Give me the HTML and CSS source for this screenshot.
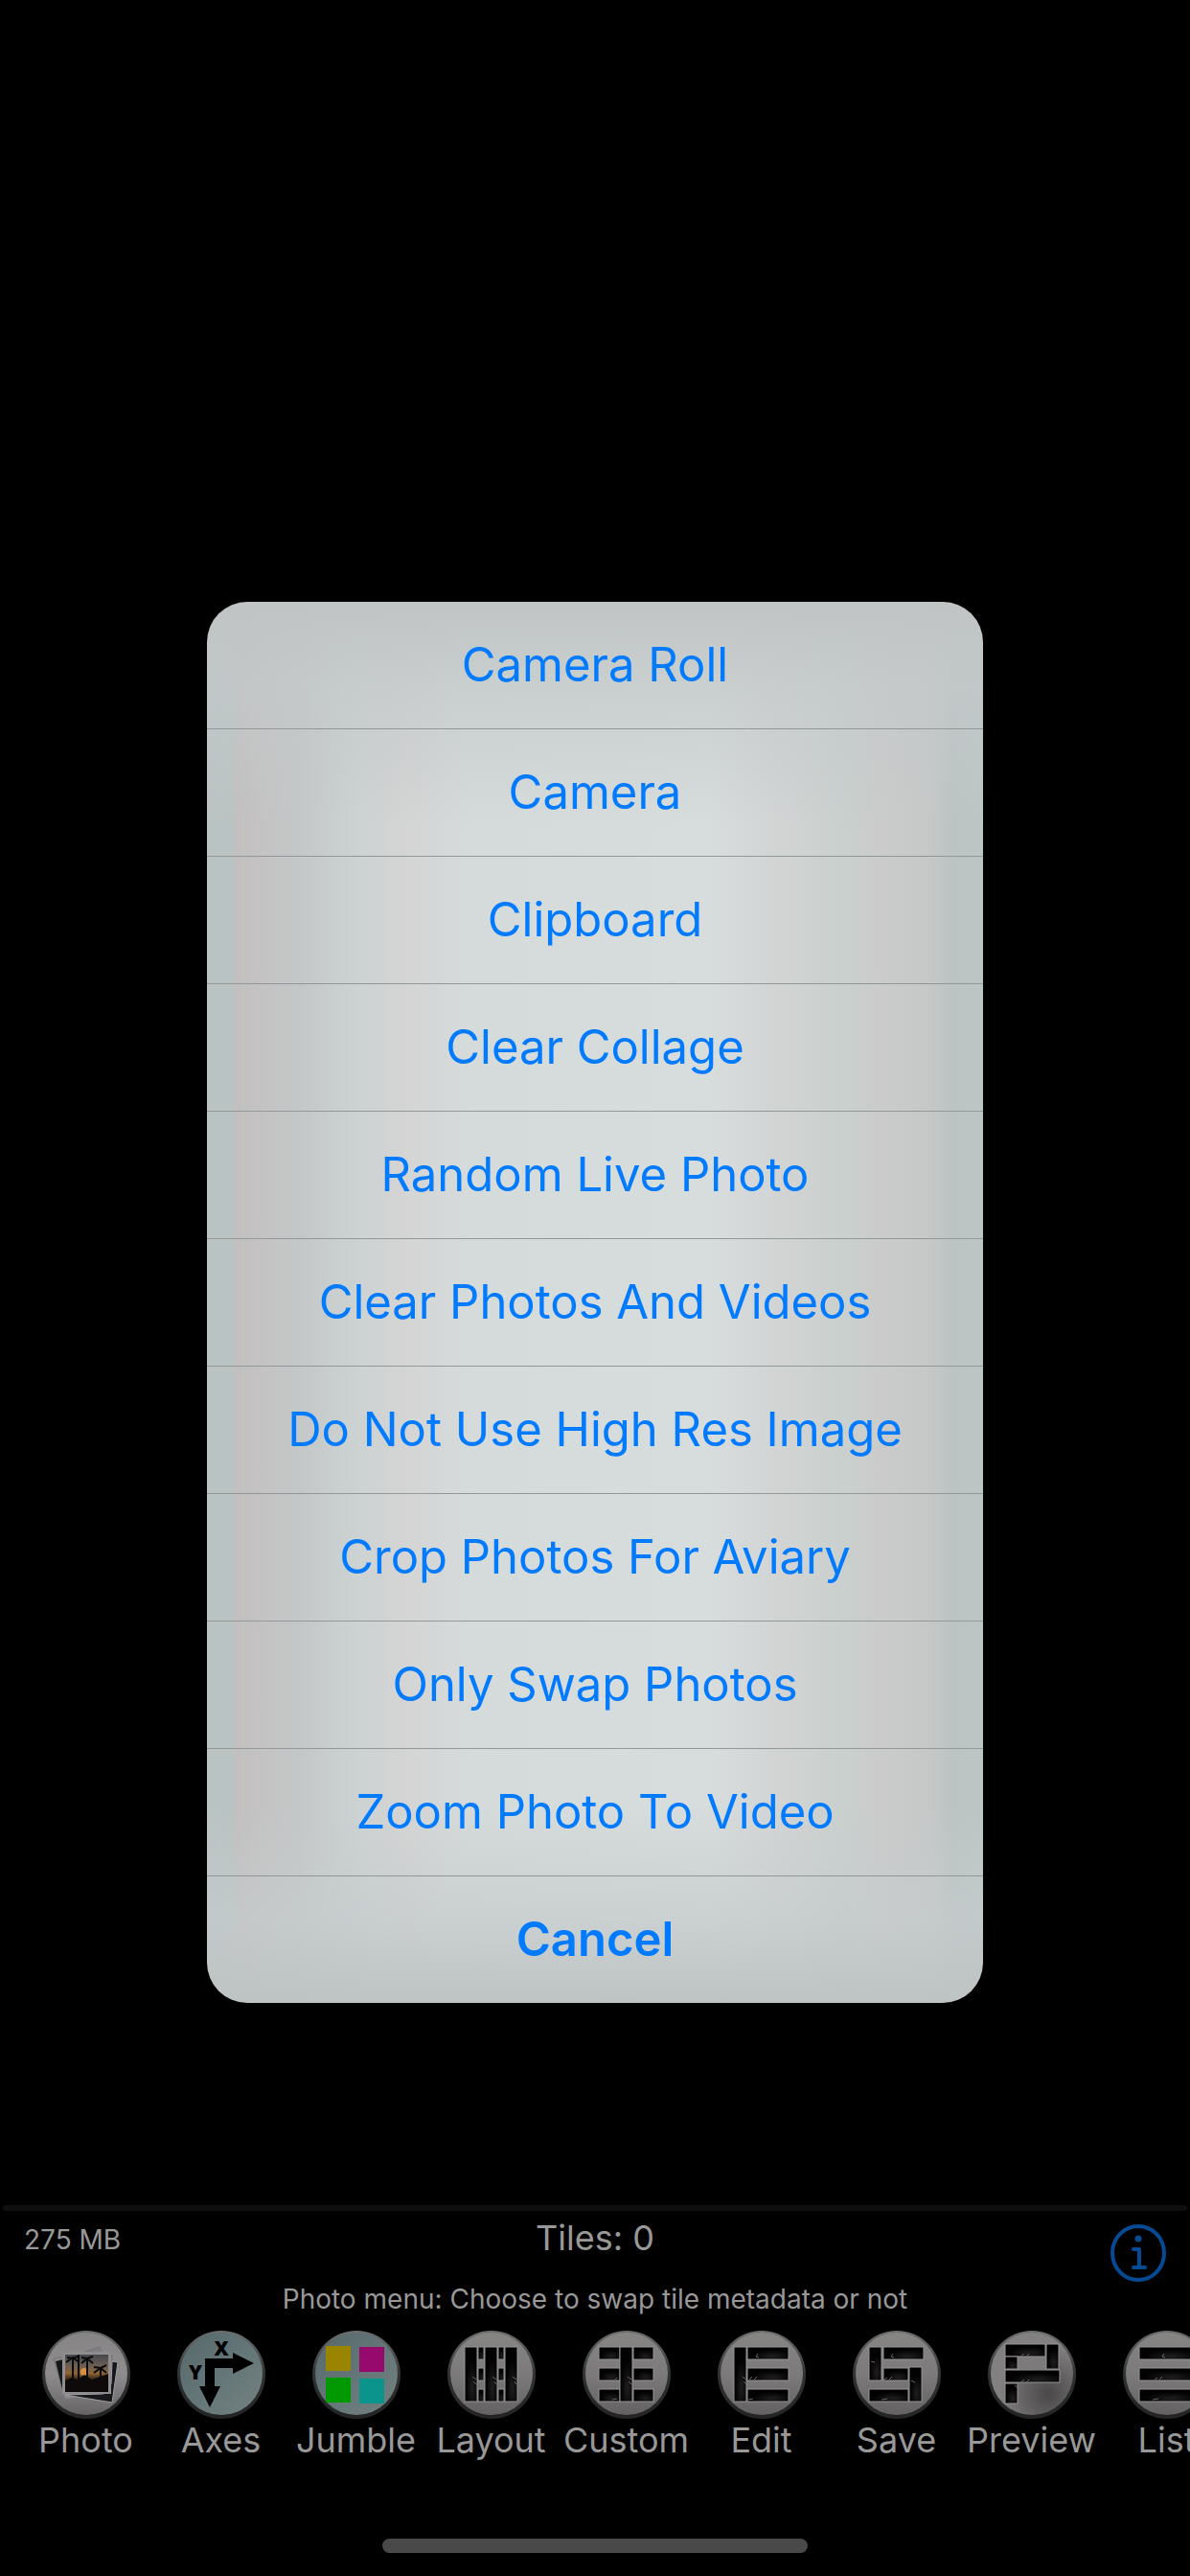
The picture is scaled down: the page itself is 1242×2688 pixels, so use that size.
FILE: index.html
```html
<!DOCTYPE html>
<html lang="en">
<head>
  <meta charset="UTF-8">
  <meta name="viewport" content="width=device-width, initial-scale=1">
  <title>Collage</title>
  <link rel="stylesheet" href="styles.css">
</head>
<body>
  <!-- Shared gradients for the toolbar icons -->
  <svg class="defs" width="0" height="0" aria-hidden="true">
    <defs>
      <linearGradient id="rim" x1="0" y1="0" x2="0" y2="1">
        <stop offset="0" stop-color="#6f7070"/>
        <stop offset="0.5" stop-color="#303233"/>
        <stop offset="1" stop-color="#222324"/>
      </linearGradient>
      <linearGradient id="gray" x1="0" y1="0" x2="0" y2="1">
        <stop offset="0" stop-color="#878484"/>
        <stop offset="0.5" stop-color="#7d7a7b"/>
        <stop offset="1" stop-color="#636161"/>
      </linearGradient>
      <linearGradient id="silver" x1="0" y1="0" x2="0" y2="1">
        <stop offset="0" stop-color="#868484"/>
        <stop offset="0.5" stop-color="#8f8c8e"/>
        <stop offset="1" stop-color="#666465"/>
      </linearGradient>
      <linearGradient id="teal" x1="0" y1="0" x2="1" y2="1">
        <stop offset="0" stop-color="#57686a"/>
        <stop offset="0.5" stop-color="#647678"/>
        <stop offset="1" stop-color="#74817f"/>
      </linearGradient>
      <radialGradient id="shade" cx="0.7" cy="0.75" r="0.6">
        <stop offset="0" stop-color="#4a4849"/>
        <stop offset="0.5" stop-color="#646263"/>
        <stop offset="1" stop-color="#828080"/>
      </radialGradient>
      <radialGradient id="glow" cx="0.6" cy="0.75" r="0.5">
        <stop offset="0" stop-color="#1e1e1e"/>
        <stop offset="1" stop-color="#020202"/>
      </radialGradient>
      <linearGradient id="sunset" x1="0" y1="0" x2="0" y2="1">
        <stop offset="0" stop-color="#45474d"/>
        <stop offset="0.3" stop-color="#6b5f55"/>
        <stop offset="0.5" stop-color="#8f6430"/>
        <stop offset="0.62" stop-color="#4a3320"/>
        <stop offset="1" stop-color="#0c0908"/>
      </linearGradient>
    </defs>
  </svg>

  <main class="canvas"></main>

  <footer class="panel">
    <div class="divider"></div>
    <div class="status">
      <span class="memory">275 MB</span>
      <span class="tiles">Tiles: 0</span>
      <button class="info" type="button" aria-label="Info">
        <svg width="58" height="60" viewBox="0 0 58 60" fill="none" stroke="#044a94">
          <ellipse cx="29" cy="30" rx="27" ry="28" stroke-width="4"/>
          <circle cx="29" cy="15" r="3.5" fill="#044a94" stroke="none"/>
          <path d="M24 26h6v19M24 45h12" stroke-width="4" stroke-linecap="round" stroke-linejoin="round"/>
        </svg>
      </button>
    </div>
    <p class="message">Photo menu: Choose to swap tile metadata or not</p>

    <nav class="toolbar">
      <button class="tool" type="button">
        <svg viewBox="0 0 92 92">
          <circle cx="46" cy="46" r="46" fill="url(#rim)"/>
          <circle cx="46" cy="45" r="43" fill="url(#silver)"/>
          <g stroke="#a19fa1">
            <path d="M12 29l40-5 6 42-34 6z" fill="#8b898b" stroke="#777577"/>
            <path d="M32 26l28-9 3 6 10 3-1 48-46-7z" fill="#807e80" stroke="#777577"/>
            <path d="M14 32l8-2v35z" fill="#151719" stroke="none"/>
            <path d="M73 32l6 1-6 42-49-8 40-1 8-10z" fill="#17181b"/>
          </g>
          <path d="M21 22h51v44H21z" fill="#8f8d8f"/>
          <path d="M24 25h45v39H24z" fill="url(#sunset)"/>
          <circle cx="44" cy="43" r="4" fill="#d8903a"/>
          <path d="M24 52l7-3 6 2 7-5 8 5 17-6v19H24z" fill="#0d0a09"/>
          <path d="M32 30v30M38 25v36M47 30v22M61 39v13" stroke="#0b0a0c" stroke-width="2"/>
          <path d="M25 33l7-5 5 4M26 28l6 1 5-2M41 34l6-5 6 5M41 28l6 1 6-2M54 44l7-5 6 5M54 38l7 1 6-3" fill="none" stroke="#0b0a0c" stroke-width="2"/>
        </svg>
        <span>Photo</span>
      </button>
      <button class="tool" type="button">
        <svg viewBox="0 0 92 92">
          <circle cx="46" cy="46" r="46" fill="url(#rim)"/>
          <circle cx="46" cy="45" r="43" fill="url(#teal)"/>
          <path d="M29 29h29v-6l22 11-22 11v-6H39v19h6L34 80 23 58h6z"/>
          <text class="axis" x="46" y="26" text-anchor="middle">X</text>
          <text class="axis" x="19" y="51" text-anchor="middle">Y</text>
        </svg>
        <span>Axes</span>
      </button>
      <button class="tool" type="button">
        <svg viewBox="0 0 92 92">
          <circle cx="46" cy="46" r="46" fill="url(#rim)"/>
          <circle cx="46" cy="45" r="43" fill="url(#teal)"/>
          <path d="M14 16h26v26H14z" fill="#998500"/>
          <path d="M49 17h26v26H49z" fill="#960a6e"/>
          <path d="M14 49h26v26H14z" fill="#009a00"/>
          <path d="M49 50h26v26H49z" fill="#0b948b"/>
        </svg>
        <span>Jumble</span>
      </button>
      <button class="tool" type="button">
        <svg viewBox="0 0 92 92">
          <circle cx="46" cy="46" r="46" fill="url(#rim)"/>
          <circle cx="46" cy="45" r="43" fill="url(#gray)"/>
          <g class="blocks">
            <rect x="32" y="17" width="6" height="13"/>
            <rect x="32" y="39" width="6" height="13"/>
            <rect x="32" y="61" width="6" height="13"/>
            <rect x="53" y="17" width="6" height="13"/>
            <rect x="53" y="39" width="6" height="13"/>
            <rect x="53" y="61" width="6" height="13"/>
            <rect x="18" y="17" width="13" height="57"/>
            <rect x="39" y="17" width="13" height="57"/>
            <rect x="60" y="17" width="13" height="57"/>
          </g>
          <path class="sparks" d="M26 48l4 3M27 53l3 3M47 48l4 3M49 53l2 3M68 48l4 3M70 53l2 3"/>
        </svg>
        <span>Layout</span>
      </button>
      <button class="tool" type="button">
        <svg viewBox="0 0 92 92">
          <circle cx="46" cy="46" r="46" fill="url(#rim)"/>
          <circle cx="46" cy="45" r="43" fill="url(#gray)"/>
          <g class="blocks">
            <rect x="17" y="17" width="22" height="13"/>
            <rect x="17" y="39" width="22" height="13"/>
            <rect x="17" y="61" width="22" height="13"/>
            <rect x="53" y="17" width="21" height="13"/>
            <rect x="53" y="39" width="21" height="13"/>
            <rect x="53" y="61" width="21" height="13"/>
            <rect x="39" y="17" width="13" height="57"/>
          </g>
          <path class="sparks" d="M47 48l4 3M48 53l3 3M36 49l-3 3M31 72l5-1"/>
        </svg>
        <span>Custom</span>
      </button>
      <button class="tool" type="button">
        <svg viewBox="0 0 92 92">
          <circle cx="46" cy="46" r="46" fill="url(#rim)"/>
          <circle cx="46" cy="45" r="43" fill="url(#gray)"/>
          <g class="blocks">
            <rect x="31" y="17" width="43" height="13"/>
            <rect x="31" y="39" width="43" height="13"/>
            <rect x="31" y="61" width="43" height="13"/>
            <rect x="17" y="17" width="13" height="57"/>
          </g>
          <path class="sparks" d="M42 24l-2 3 3 1M26 48l4 3M27 53l3 3M36 48l-3 3M41 48l-3 3M32 72l5-1"/>
        </svg>
        <span>Edit</span>
      </button>
      <button class="tool" type="button">
        <svg viewBox="0 0 92 92">
          <circle cx="46" cy="46" r="46" fill="url(#rim)"/>
          <circle cx="46" cy="45" r="43" fill="url(#gray)"/>
          <g class="blocks">
            <rect x="32" y="17" width="42" height="13"/>
            <rect x="32" y="39" width="26" height="13"/>
            <rect x="17" y="61" width="41" height="13"/>
            <rect x="17" y="17" width="13" height="35"/>
            <rect x="59" y="38" width="13" height="36"/>
          </g>
          <path class="sparks" d="M42 24l-2 3 3 1M19 32l4 1M61 52l4 2M36 49l-3 2M41 48l-3 3M30 72l6-1"/>
        </svg>
        <span>Save</span>
      </button>
      <button class="tool" type="button">
        <svg viewBox="0 0 92 92">
          <circle cx="46" cy="46" r="46" fill="url(#rim)"/>
          <circle cx="46" cy="45" r="43" fill="url(#shade)"/>
          <path d="M31 28h30v12H31z" fill="#7c7a7b"/>
          <g class="blocks">
            <rect x="18" y="14" width="42" height="13"/>
            <rect x="61" y="14" width="13" height="26"/>
            <rect x="18" y="27" width="13" height="13"/>
            <rect x="18" y="41" width="57" height="13"/>
            <rect x="18" y="55" width="13" height="21"/>
          </g>
          <path class="sparks" d="M38 24l-4 3M43 24l-3 3M38 51l-4 3M43 51l-3 3M28 57l3 2"/>
        </svg>
        <span>Preview</span>
      </button>
      <button class="tool" type="button">
        <svg viewBox="0 0 92 92">
          <circle cx="46" cy="46" r="46" fill="url(#rim)"/>
          <circle cx="46" cy="45" r="43" fill="url(#gray)"/>
          <g class="blocks">
            <rect x="17" y="17" width="57" height="13"/>
            <rect x="17" y="39" width="57" height="13"/>
            <rect x="17" y="61" width="57" height="13"/>
          </g>
          <path class="sparks" d="M43 24l-2 3 3 1M36 49l-3 2M41 48l-3 3M31 72l6-1"/>
        </svg>
        <span>List</span>
      </button>
    </nav>

    <div class="home-indicator"></div>
  </footer>

  <div class="overlay">
    <div class="menu" role="dialog" aria-label="Photo menu">
      <button type="button">Camera Roll</button>
      <button type="button">Camera</button>
      <button type="button">Clipboard</button>
      <button type="button">Clear Collage</button>
      <button type="button">Random Live Photo</button>
      <button type="button">Clear Photos And Videos</button>
      <button type="button">Do Not Use High Res Image</button>
      <button type="button">Crop Photos For Aviary</button>
      <button type="button">Only Swap Photos</button>
      <button type="button">Zoom Photo To Video</button>
      <button type="button" class="cancel">Cancel</button>
    </div>
  </div>
</body>
</html>
```
FILE: styles.css
```css
* {
  box-sizing: border-box;
  margin: 0;
  padding: 0;
}
body {
  display: flex;
  flex-direction: column;
  min-height: 100vh;
  background: #000;
  color: #989898;
  font-family: Inter, "Liberation Sans", sans-serif;
  overflow: hidden;
}
button {
  border: none;
  background: none;
  color: inherit;
  font: inherit;
  cursor: pointer;
}
.defs {
  position: absolute;
}
.canvas {
  flex: 1;
}

/* Bottom panel */
.panel {
  padding-bottom: 24px;
}
.divider {
  height: 6px;
  margin: 0 3px;
  border-radius: 3px;
  background: #0e0f11;
}
.status {
  display: grid;
  grid-template-columns: 1fr auto 1fr;
  align-items: start;
  padding: 14px 25px 0;
}
.memory {
  font-size: 28px;
  line-height: 32px;
}
.tiles {
  font-size: 36px;
  line-height: 28px;
}
.info {
  justify-self: end;
  height: 60px;
}
.info svg {
  display: block;
}
.message {
  font-size: 28px;
  line-height: 36px;
  text-align: center;
}
.toolbar {
  display: flex;
  padding: 15px 0 0 19px;
  overflow: hidden;
}
.tool {
  display: flex;
  flex: 0 0 141px;
  flex-direction: column;
  align-items: center;
  font-size: 36px;
  line-height: 44px;
  white-space: nowrap;
}
.tool svg {
  width: 92px;
  height: 92px;
}
.axis {
  font-family: "Open Sans", sans-serif;
  font-size: 21px;
  font-weight: 800;
}
.blocks {
  fill: url(#glow);
  stroke: #969394;
  stroke-width: 1;
}
.sparks {
  fill: none;
  stroke: #666;
  stroke-width: 1;
}
.home-indicator {
  width: 444px;
  max-width: 60%;
  height: 15px;
  margin: 81px auto 0;
  border-radius: 8px;
  background: #494949;
}

/* Action menu */
.overlay {
  position: fixed;
  inset: 0;
  display: flex;
  align-items: center;
  justify-content: center;
  padding: 30px 24px 0;
}
.menu {
  width: 810px;
  border-radius: 42px;
  overflow: hidden;
  background:
    linear-gradient(rgba(192, 196, 196, 1), rgba(196, 201, 202, 0.7) 6%, rgba(204, 209, 209, 0) 16%, rgba(204, 209, 209, 0) 86%, rgba(198, 204, 205, 0.7) 94%, rgba(190, 195, 195, 1)),
    linear-gradient(90deg, #bcc2c2, #b9c3c3 3%, #c2bfbf 4%, #c4c3c3 7%, #c4c7c8 12%, #ccd2d2 19%, #d4d4d4 25%, #d5d8d8 30%, #d5dbda 34%, #d7dcdc 65%, #d2d4d4 74%, #c9d0ce 82%, #cbcbcb 87%, #c6c8c8 93%, #bcc3c3 96%, #bcc5c5);
}
.menu button {
  display: block;
  width: 100%;
  border-bottom: 1px solid #929797;
  color: #007aff;
  font-size: 49px;
  line-height: 132px;
}
.menu .cancel {
  border-bottom: none;
  font-weight: 600;
}
```
